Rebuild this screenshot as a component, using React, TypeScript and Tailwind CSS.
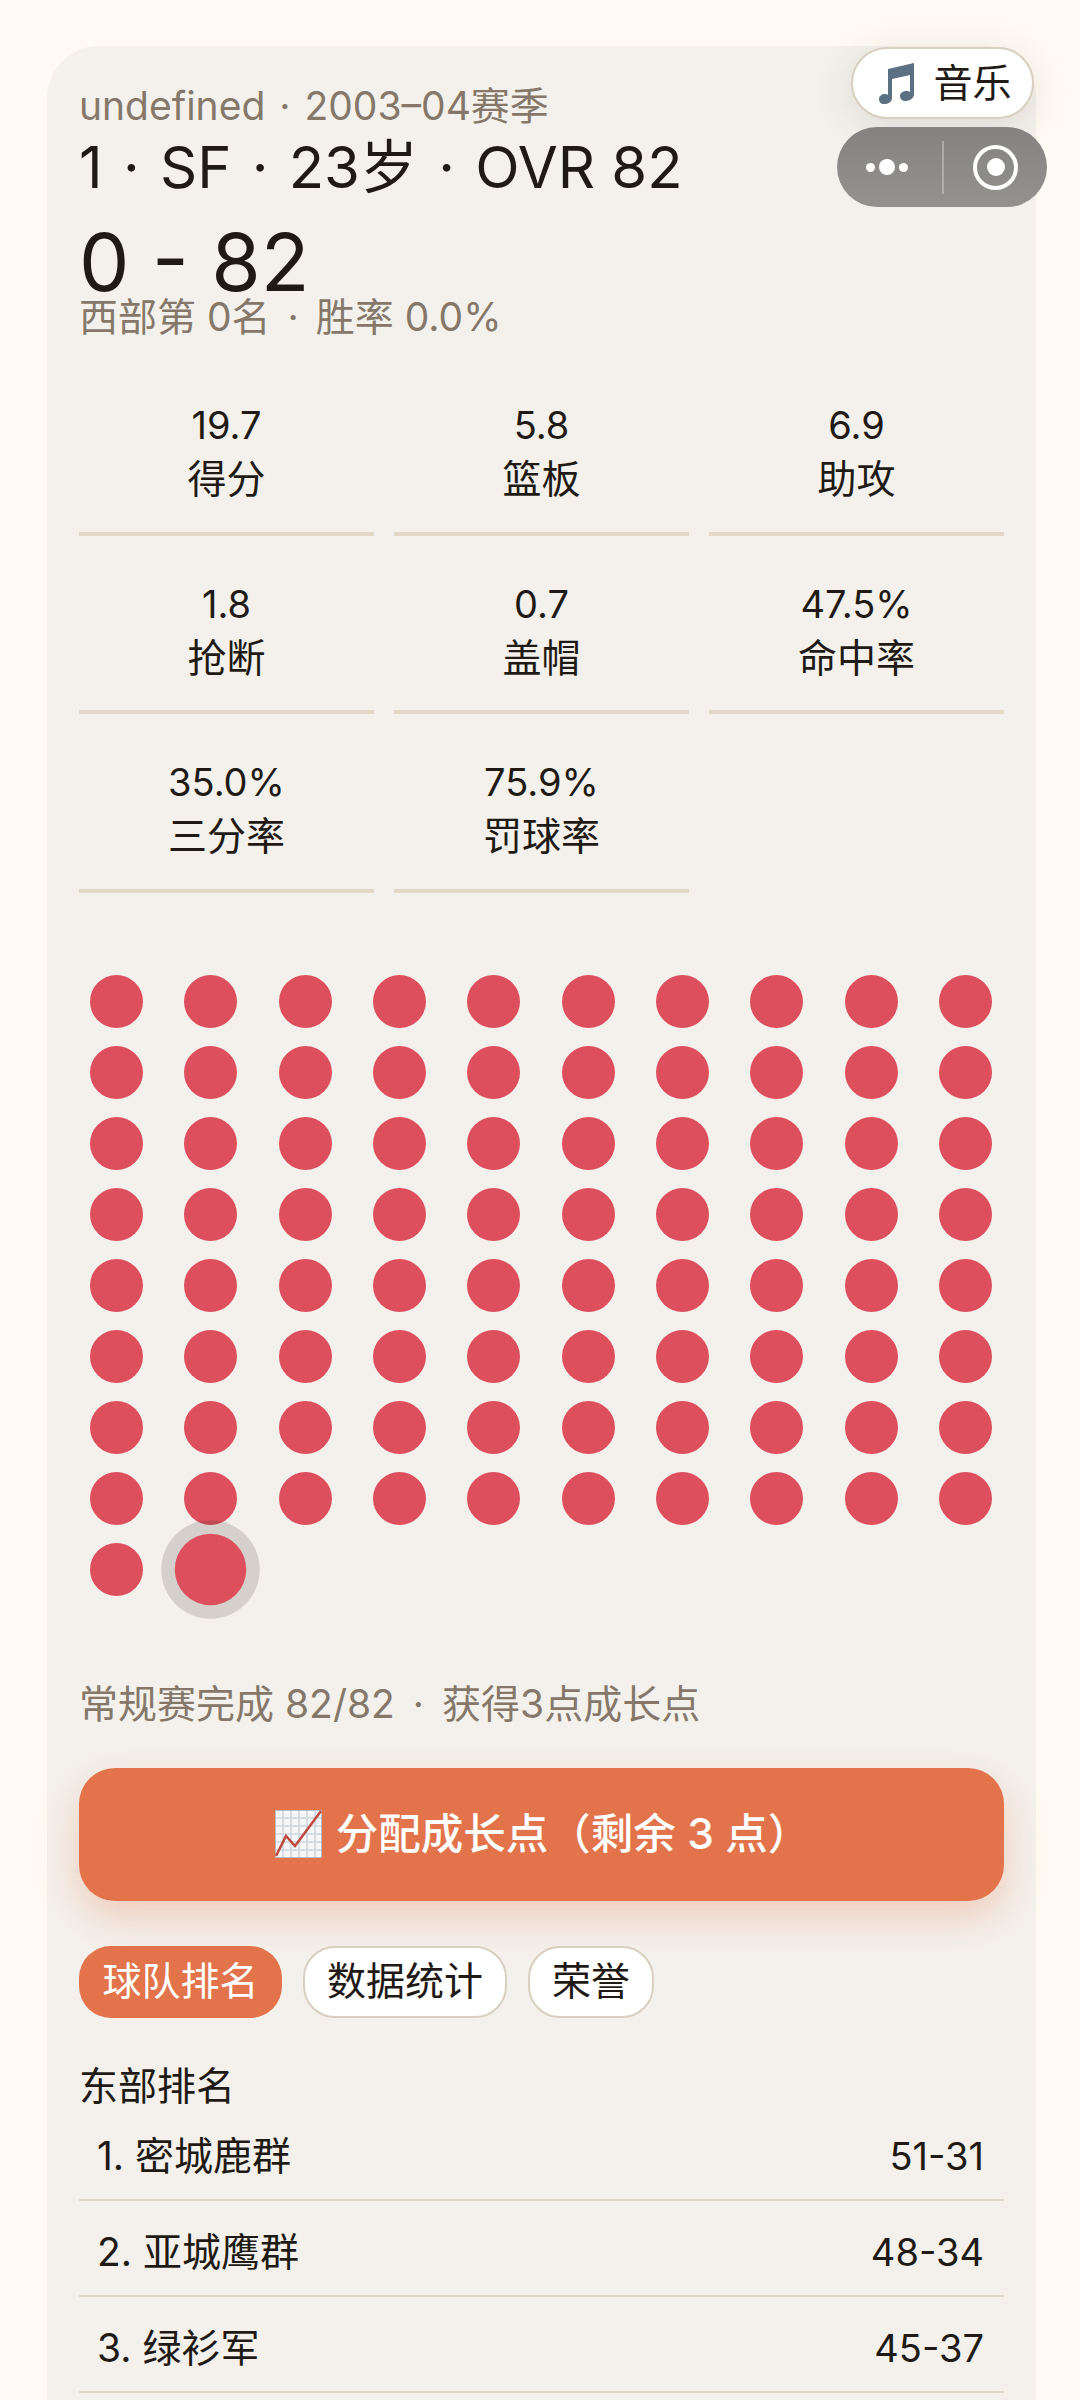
const STATS = [
  { value: '19.7', label: '得分' },
  { value: '5.8', label: '篮板' },
  { value: '6.9', label: '助攻' },
  { value: '1.8', label: '抢断' },
  { value: '0.7', label: '盖帽' },
  { value: '47.5%', label: '命中率' },
  { value: '35.0%', label: '三分率' },
  { value: '75.9%', label: '罚球率' },
];

const STANDINGS = [
  { name: '1. 密城鹿群', record: '51-31' },
  { name: '2. 亚城鹰群', record: '48-34' },
  { name: '3. 绿衫军', record: '45-37' },
];

const TABS = ['球队排名', '数据统计', '荣誉'];

function ChartIcon() {
  return (
    <svg width="47" height="48" viewBox="0 0 47 48" className="shrink-0">
      <rect x="0" y="0" width="47" height="48" fill="#f4f6f8" />
      <path
        d="M8 0V48M16 0V48M24 0V48M32 0V48M40 0V48M0 8H47M0 16H47M0 24H47M0 32H47M0 40H47"
        stroke="#ccd6dd"
        strokeWidth="1.5"
      />
      <rect x="0.5" y="0.5" width="46" height="47" fill="none" stroke="#b4bcc4" />
      <path d="M1 46L11 26L20 36L46 1" fill="none" stroke="#c0493f" strokeWidth="2.5" />
    </svg>
  );
}

function NoteIcon() {
  return (
    <svg width="36" height="42" viewBox="0 0 36 42" className="shrink-0">
      <path
        d="M9 7L35 1V32C35 36 31 39 27 39C23 39 21 37 21 34C21 31 24 29 28 29C29 29 30 29 31 30V13L13 17V36C13 40 9 42 5 42C2 42 0 40 0 37C0 34 3 32 6 32C7 32 8 32 9 33Z"
        fill="#5b7083"
      />
    </svg>
  );
}

export default function App() {
  return (
    <div
      className="relative h-[2400px] w-[1080px] overflow-hidden bg-[#fffaf3] pl-[47px] pr-[44px] pt-[46px] text-[#1f1a14]"
      style={{ fontFamily: '"Inter", "Noto Sans CJK SC", sans-serif' }}
    >
      <div className="h-[2400px] rounded-tl-[52px] rounded-tr-[52px] bg-[#f4f1ec] px-[32px] pt-[37px]">
        {/* Header */}
        <div className="text-[39px] leading-[46px] text-[#85786a]">
          undefined <span className="px-[3px]">·</span> 2003–04赛季
        </div>
        <div className="mt-[5px] text-[58px] leading-[66px]">
          1 <span className="px-[4px]">·</span> SF <span className="px-[4px]">·</span> 23岁{' '}
          <span className="px-[4px]">·</span> OVR 82
        </div>
        <div className="mt-[18px] text-[80px] leading-[88px]">0 - 82</div>
        <div className="mt-[-12px] text-[39px] leading-[46px] text-[#85786a]">
          西部第 0名 <span className="px-[6px]">·</span> 胜率 0.0%
        </div>

        {/* Season stats */}
        <div className="mt-[17px] grid grid-cols-3 gap-x-[20px]">
          {STATS.map(stat => (
            <div
              key={stat.label}
              className="flex h-[178.5px] flex-col items-center border-b-[4px] border-[#e2d8c7] pt-[41px] leading-[54px]"
            >
              <div className="text-[38px]">{stat.value}</div>
              <div className="text-[39px]">{stat.label}</div>
            </div>
          ))}
        </div>

        {/* Game dots */}
        <div className="mt-[82px] grid grid-cols-[repeat(10,53px)] justify-between gap-y-[18px] pl-[11px] pr-[12px]">
          {Array.from({ length: 82 }).map((_, i) => (
            <div
              key={i}
              className={
                i === 81
                  ? 'h-[53px] w-[53px] scale-[1.35] rounded-full bg-[#dd4f5d] shadow-[0_0_0_10px_rgba(60,50,40,0.17)]'
                  : 'h-[53px] w-[53px] rounded-full bg-[#dd4f5d]'
              }
            />
          ))}
        </div>

        <div className="mt-[85px] text-[39px] leading-[46px] text-[#85786a]">
          常规赛完成 82/82 <span className="px-[7px]">·</span> 获得3点成长点
        </div>

        {/* Growth points */}
        <button className="mt-[41px] flex h-[133px] w-full items-center justify-center gap-[14px] rounded-[36px] bg-[#e2734a] pl-[2px] text-[42.5px] font-medium text-white shadow-[0_16px_40px_rgba(226,115,74,0.3)]">
          <ChartIcon />
          <span>分配成长点（剩余 3 点）</span>
        </button>

        {/* Tabs */}
        <div className="mt-[45px] flex gap-[21px]">
          {TABS.map((tab, i) => (
            <div
              key={tab}
              className={
                i === 0
                  ? 'flex h-[72px] items-center rounded-[32px] bg-[#e2734a] px-[23.5px] text-[39px] text-white'
                  : 'flex h-[72px] items-center rounded-[32px] border-[2px] border-[#d9cfc0] bg-white px-[22px] text-[39px]'
              }
            >
              {tab}
            </div>
          ))}
        </div>

        {/* Standings */}
        <div className="mt-[49px] text-[39px] leading-[38px]">东部排名</div>
        <div>
          {STANDINGS.map(row => (
            <div
              key={row.name}
              className="flex h-[96px] items-center justify-between border-b-[2px] border-[#e2d8c7] pl-[18px] pr-[20px] pt-[10px] text-[39px]"
            >
              <span>{row.name}</span>
              <span className="text-[38px]">{row.record}</span>
            </div>
          ))}
        </div>
      </div>

      {/* Music button */}
      <div className="absolute left-[851px] top-[47px] flex h-[72px] w-[183px] items-center justify-center gap-[18px] rounded-[36px] border-[2px] border-[#d9cfc0] bg-white pl-[6px] text-[39px] shadow-[0_8px_40px_rgba(60,50,40,0.12)]">
        <NoteIcon />
        <span>音乐</span>
      </div>

      {/* Mini program capsule */}
      <div className="absolute left-[837px] top-[127px] flex h-[80px] w-[210px] items-center rounded-[40px] bg-gradient-to-b from-[#848381] to-[#93928f]">
        <div className="flex w-[105px] items-center justify-center gap-[4px] pr-[6px]">
          <div className="h-[9px] w-[9px] rounded-full bg-white" />
          <div className="h-[16px] w-[16px] rounded-full bg-white" />
          <div className="h-[9px] w-[9px] rounded-full bg-white" />
        </div>
        <div className="h-[53px] w-[2px] bg-white/30" />
        <div className="flex flex-1 items-center justify-center">
          <div className="flex h-[45px] w-[45px] items-center justify-center rounded-full border-[4px] border-white">
            <div className="h-[18px] w-[18px] rounded-full bg-white" />
          </div>
        </div>
      </div>
    </div>
  );
}
